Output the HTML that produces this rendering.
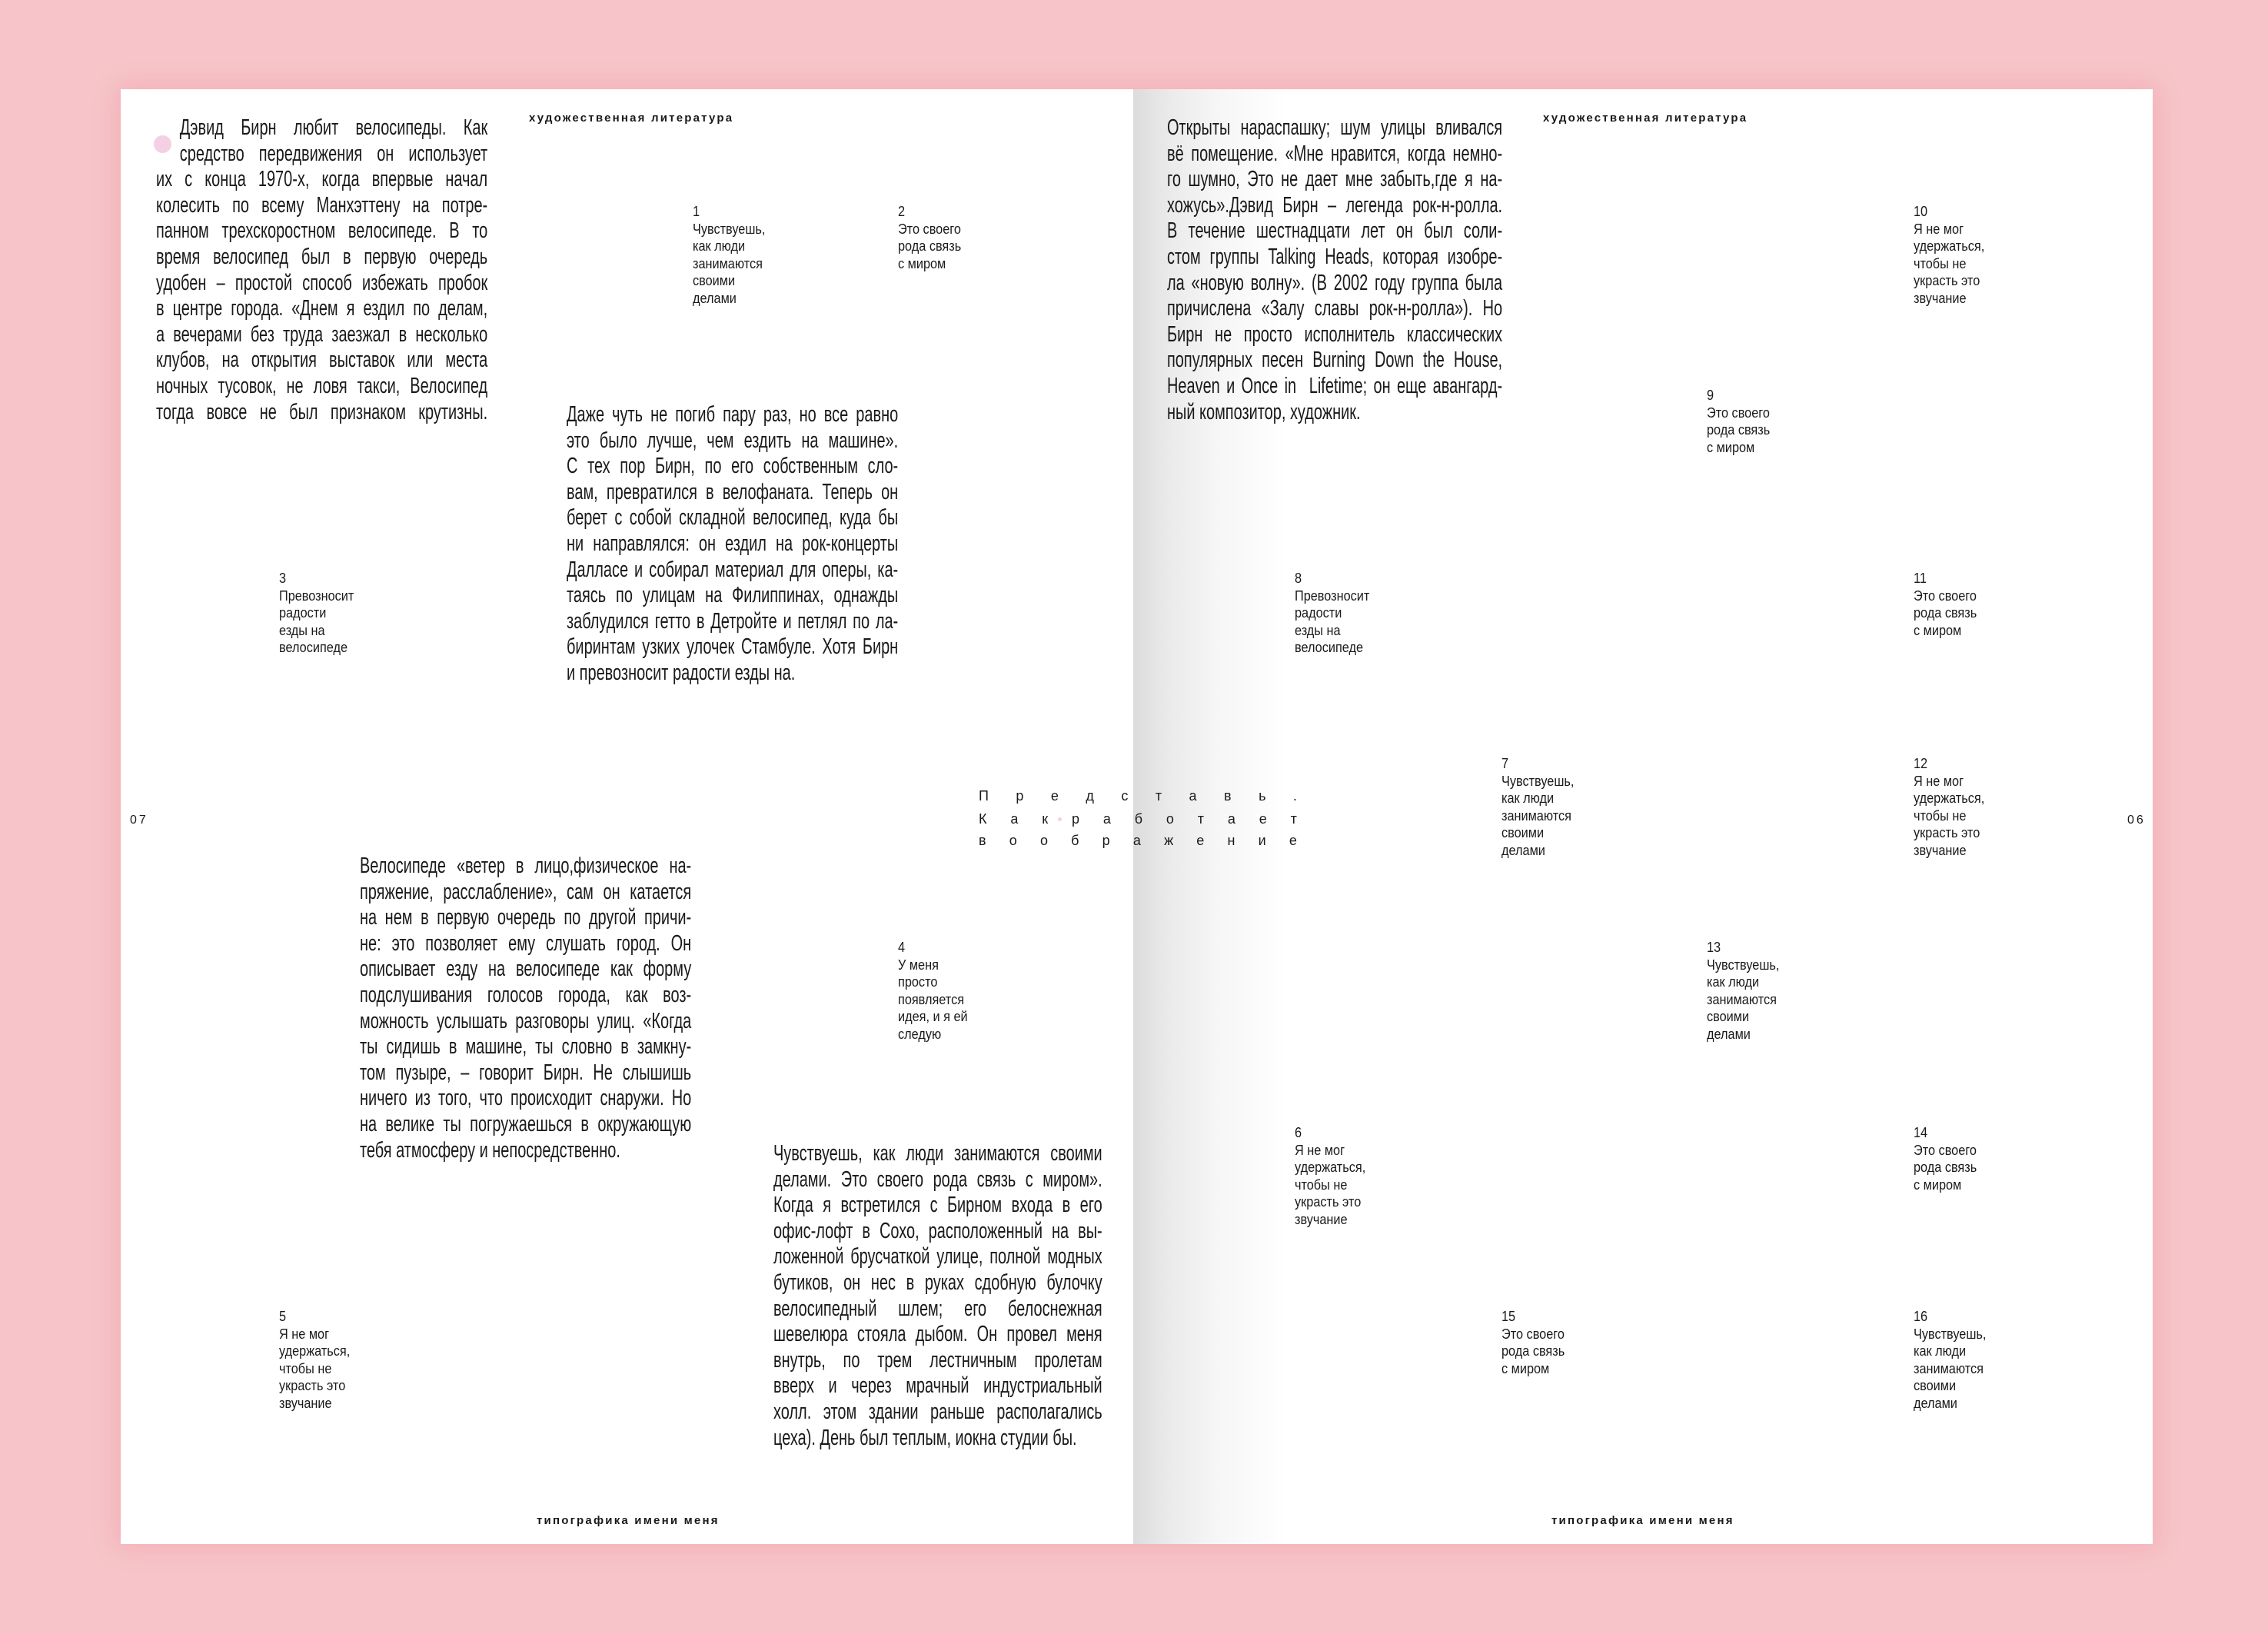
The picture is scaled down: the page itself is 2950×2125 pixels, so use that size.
<!DOCTYPE html>
<html><head><meta charset="utf-8">
<style>
html,body{margin:0;padding:0}
body{width:2950px;height:2125px;position:relative;overflow:hidden;background:#f7c5c9;font-family:"Liberation Sans Narrow","Liberation Sans",sans-serif;color:#1a1a1a}
.page{position:absolute;left:157px;top:116px;width:2643px;height:1892px;background:#fff;box-shadow:0 0 30px 6px rgba(235,150,160,0.45)}
.spine{position:absolute;left:1474px;top:116px;width:200px;height:1892px;background:linear-gradient(to right,#dcdcdc 0%,#ebebeb 25%,#f6f6f6 55%,#fff 100%)}
.blk{position:absolute;font-size:28.5px;line-height:33.6px;transform:scaleX(0.70);transform-origin:0 0}
.blk div{text-align:justify;text-align-last:justify}
.blk div.l{text-align-last:left}
.blk div.i{padding-left:44px}
.hd{position:absolute;font-size:15px;letter-spacing:2.2px;font-weight:bold;line-height:20px;white-space:nowrap}
.note{position:absolute;font-size:18.5px;line-height:22.4px;white-space:nowrap;transform:scaleX(0.88);transform-origin:0 0}
.note .n{line-height:25px}
.pn{position:absolute;font-size:16px;letter-spacing:3px;line-height:20px}
.ctr{position:absolute;left:1273px;width:414px;display:flex;justify-content:space-between;font-size:18px;line-height:26px;letter-spacing:0}
.dot{position:absolute;border-radius:50%;background:#f4d0e2}
</style></head><body>
<div class="page"></div>
<div class="spine"></div>

<div class="hd" style="left:688px;top:144px">художественная литература</div>
<div class="hd" style="left:2007px;top:144px">художественная литература</div>
<div class="hd" style="left:698px;top:1968px">типографика имени меня</div>
<div class="hd" style="left:2018px;top:1968px">типографика имени меня</div>
<div class="pn" style="left:169px;top:1057px">07</div>
<div class="pn" style="left:2767px;top:1057px">06</div>

<div class="dot" style="left:200px;top:176px;width:23px;height:23px"></div>

<div class="blk" style="left:203px;top:150px;width:616px">
<div class="i">Дэвид Бирн любит велосипеды. Как</div>
<div class="i">средство передвижения он использует</div>
<div>их с конца 1970-х, когда впервые начал</div>
<div>колесить по всему Манхэттену на потре-</div>
<div>панном трехскоростном велосипеде. В то</div>
<div>время велосипед был в первую очередь</div>
<div>удобен – простой способ избежать пробок</div>
<div>в центре города. «Днем я ездил по делам,</div>
<div>а вечерами без труда заезжал в несколько</div>
<div>клубов, на открытия выставок или места</div>
<div>ночных тусовок, не ловя такси, Велосипед</div>
<div>тогда вовсе не был признаком крутизны.</div>
</div>

<div class="blk" style="left:737px;top:523px;width:616px">
<div>Даже чуть не погиб пару раз, но все равно</div>
<div>это было лучше, чем ездить на машине».</div>
<div>С тех пор Бирн, по его собственным сло-</div>
<div>вам, превратился в велофаната. Теперь он</div>
<div>берет с собой складной велосипед, куда бы</div>
<div>ни направлялся: он ездил на рок-концерты</div>
<div>Далласе и собирал материал для оперы, ка-</div>
<div>таясь по улицам на Филиппинах, однажды</div>
<div>заблудился гетто в Детройте и петлял по ла-</div>
<div>биринтам узких улочек Стамбуле. Хотя Бирн</div>
<div class="l">и превозносит радости езды на.</div>
</div>

<div class="blk" style="left:468px;top:1110px;width:616px">
<div>Велосипеде «ветер в лицо,физическое на-</div>
<div>пряжение, расслабление», сам он катается</div>
<div>на нем в первую очередь по другой причи-</div>
<div>не: это позволяет ему слушать город. Он</div>
<div>описывает езду на велосипеде как форму</div>
<div>подслушивания голосов города, как воз-</div>
<div>можность услышать разговоры улиц. «Когда</div>
<div>ты сидишь в машине, ты словно в замкну-</div>
<div>том пузыре, – говорит Бирн. Не слышишь</div>
<div>ничего из того, что происходит снаружи. Но</div>
<div>на велике ты погружаешься в окружающую</div>
<div class="l">тебя атмосферу и непосредственно.</div>
</div>

<div class="blk" style="left:1006px;top:1484px;width:611px">
<div>Чувствуешь, как люди занимаются своими</div>
<div>делами. Это своего рода связь с миром».</div>
<div>Когда я встретился с Бирном входа в его</div>
<div>офис-лофт в Сохо, расположенный на вы-</div>
<div>ложенной брусчаткой улице, полной модных</div>
<div>бутиков, он нес в руках сдобную булочку</div>
<div>велосипедный шлем; его белоснежная</div>
<div>шевелюра стояла дыбом. Он провел меня</div>
<div>внутрь, по трем лестничным пролетам</div>
<div>вверх и через мрачный индустриальный</div>
<div>холл. этом здании раньше располагались</div>
<div class="l">цеха). День был теплым, иокна студии бы.</div>
</div>

<div class="blk" style="left:1518px;top:150px;width:623px">
<div>Открыты нараспашку; шум улицы вливался</div>
<div>вё помещение. «Мне нравится, когда немно-</div>
<div>го шумно, Это не дает мне забыть,где я на-</div>
<div>хожусь».Дэвид Бирн – легенда рок-н-ролла.</div>
<div>В течение шестнадцати лет он был соли-</div>
<div>стом группы Talking Heads, которая изобре-</div>
<div>ла «новую волну». (В 2002 году группа была</div>
<div>причислена «Залу славы рок-н-ролла»). Но</div>
<div>Бирн не просто исполнитель классических</div>
<div>популярных песен Burning Down the House,</div>
<div>Heaven и Once in &nbsp;Lifetime; он еще авангард-</div>
<div class="l">ный композитор, художник.</div>
</div>

<div class="ctr" style="top:1022px"><span>П</span><span>р</span><span>е</span><span>д</span><span>с</span><span>т</span><span>а</span><span>в</span><span>ь</span><span>.</span></div>
<div class="ctr" style="top:1052px"><span>К</span><span>а</span><span>к</span><span>р</span><span>а</span><span>б</span><span>о</span><span>т</span><span>а</span><span>е</span><span>т</span></div>
<div class="dot" style="left:1376px;top:1063px;width:5px;height:5px"></div>
<div class="ctr" style="top:1080px"><span>в</span><span>о</span><span>о</span><span>б</span><span>р</span><span>а</span><span>ж</span><span>е</span><span>н</span><span>и</span><span>е</span></div>

<div class="note" style="left:901px;top:262px"><div class="n">1</div>Чувствуешь,<br>как люди<br>занимаются<br>своими<br>делами</div>
<div class="note" style="left:1168px;top:262px"><div class="n">2</div>Это своего<br>рода связь<br>с миром</div>
<div class="note" style="left:363px;top:739px"><div class="n">3</div>Превозносит<br>радости<br>езды на<br>велосипеде</div>
<div class="note" style="left:1168px;top:1219px"><div class="n">4</div>У меня<br>просто<br>появляется<br>идея, и я ей<br>следую</div>
<div class="note" style="left:363px;top:1699px"><div class="n">5</div>Я не мог<br>удержаться,<br>чтобы не<br>украсть это<br>звучание</div>
<div class="note" style="left:1684px;top:1460px"><div class="n">6</div>Я не мог<br>удержаться,<br>чтобы не<br>украсть это<br>звучание</div>
<div class="note" style="left:1953px;top:980px"><div class="n">7</div>Чувствуешь,<br>как люди<br>занимаются<br>своими<br>делами</div>
<div class="note" style="left:1684px;top:739px"><div class="n">8</div>Превозносит<br>радости<br>езды на<br>велосипеде</div>
<div class="note" style="left:2220px;top:501px"><div class="n">9</div>Это своего<br>рода связь<br>с миром</div>
<div class="note" style="left:2489px;top:262px"><div class="n">10</div>Я не мог<br>удержаться,<br>чтобы не<br>украсть это<br>звучание</div>
<div class="note" style="left:2489px;top:739px"><div class="n">11</div>Это своего<br>рода связь<br>с миром</div>
<div class="note" style="left:2489px;top:980px"><div class="n">12</div>Я не мог<br>удержаться,<br>чтобы не<br>украсть это<br>звучание</div>
<div class="note" style="left:2220px;top:1219px"><div class="n">13</div>Чувствуешь,<br>как люди<br>занимаются<br>своими<br>делами</div>
<div class="note" style="left:2489px;top:1460px"><div class="n">14</div>Это своего<br>рода связь<br>с миром</div>
<div class="note" style="left:1953px;top:1699px"><div class="n">15</div>Это своего<br>рода связь<br>с миром</div>
<div class="note" style="left:2489px;top:1699px"><div class="n">16</div>Чувствуешь,<br>как люди<br>занимаются<br>своими<br>делами</div>
</body></html>
